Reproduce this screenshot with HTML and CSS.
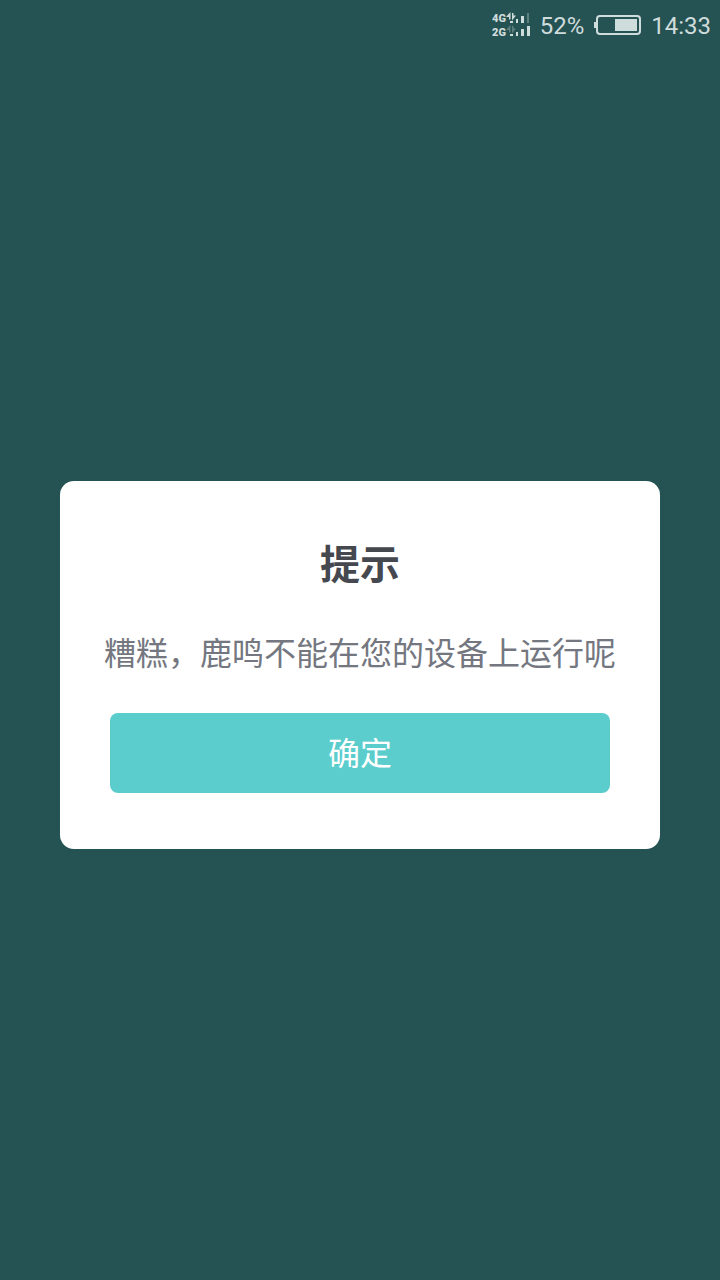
FILE: index.html
```html
<!DOCTYPE html>
<html lang="zh-CN">
<head>
	<meta charset="utf-8">
	<title>提示</title>
	<meta name="theme-color" content="#255252">
	<meta name="viewport" content="width=device-width, initial-scale=1">
	<link rel="stylesheet" href="styles.css">
</head>
<body>
<div class="statusbar">
	<svg class="signal" width="38" height="28" viewBox="0 0 38 28">
		<!-- SIM 1 -->
		<text x="0" y="10">4G</text>
		<path d="M18.5 0v7.5H17V5h-3zM20 8.500V1h1.500v2.500H24z"/>
		<path d="M18 9h3v2h-3zM24 7h2v4h-2zM29 4h3v7h-3z"/>
		<path class="dim" d="M35 1h2v10h-2z"/>
		<!-- SIM 2 -->
		<text x="0" y="24">2G</text>
		<path class="dim" d="M18.5 13v7.500H17V18h-3zM20 21.500V14h1.500v2.500H24z"/>
		<path d="M18 22h3v2h-3zM24 20h2v4h-2zM29 17h3v7h-3zM35 14h3v10h-3z"/>
	</svg>
	<span>52%</span>
	<svg class="battery" width="47" height="22" viewBox="0 0 47 22">
		<rect x="3" y="1" width="43" height="18" rx="3"/>
		<path d="M0 7h3v6H0zM21 4h22v12H21z"/>
	</svg>
	<span>14:33</span>
</div>
<div class="overlay">
	<div class="dialog" role="alertdialog" aria-labelledby="title" aria-describedby="message">
		<h1 class="title" id="title">提示</h1>
		<p class="message" id="message">糟糕，鹿鸣不能在您的设备上运行呢</p>
		<button class="confirm" type="button">确定</button>
	</div>
</div>
</body>
</html>
```

FILE: styles.css
```css
body {
	margin:0;
	min-height:100vh;
	display:flex;
	flex-direction:column;
	background-color:#255252;
	font-family:"Noto Sans CJK SC", sans-serif;
}
.statusbar {
	display:flex;
	align-items:center;
	justify-content:flex-end;
	gap:10px;
	height:48px;
	padding:2px 9px 0 0;
	color:#cfdcdc;
	font-family:Roboto, sans-serif;
	font-size:24px;
	line-height:28px;
}
.signal {
	fill:#cfdcdc;
}
.signal text {
	font-size:11px;
	font-weight:900;
}
.signal .dim {
	fill:#5d7f7e;
}
.battery {
	fill:#cfdcdc;
}
.battery rect {
	fill:none;
	stroke:#cfdcdc;
	stroke-width:2;
}
.overlay {
	flex:1;
	display:flex;
	align-items:center;
	padding:0 60px;
}
.dialog {
	flex:1;
	display:flex;
	flex-direction:column;
	gap:38px;
	padding:54px 40px 56px;
	border-radius:14px;
	background-color:#fff;
	text-align:center;
}
.title {
	margin:0;
	color:#46484f;
	font-size:40px;
	line-height:54px;
	font-weight:bold;
}
.message {
	margin:0;
	color:#747780;
	font-size:32px;
	line-height:48px;
}
.confirm {
	height:80px;
	margin:0 10px;
	padding:0 0 4px;
	border:none;
	border-radius:8px;
	background-color:#5bcdcd;
	color:#fff;
	font-family:inherit;
	font-size:32px;
	cursor:pointer;
}
```
